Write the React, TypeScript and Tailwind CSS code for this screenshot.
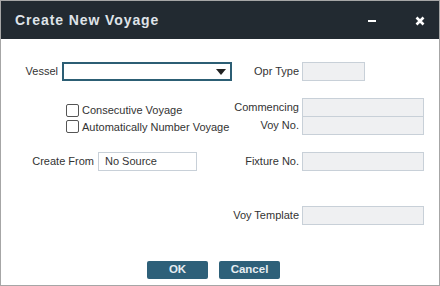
import React from "react";

const font = { fontFamily: '"Liberation Sans", Arial, sans-serif' };

const GrayInput = ({ className = "" }: { className?: string }) => (
    <div className={`h-[19px] bg-[#eff0f2] border border-[#c8d0d8] ${className}`}></div>
);

const Label = ({ children }: { children: React.ReactNode }) => (
    <span className="text-right pr-[3px] whitespace-nowrap">{children}</span>
);

const Check = ({ label }: { label: string }) => (
    <label className="flex items-center h-[18px] gap-[3px] whitespace-nowrap">
        <span className="block w-[13px] h-[13px] border border-[#555] rounded-[2px] bg-white"></span>
        <span>{label}</span>
    </label>
);

export default function App() {
    return (
        <div
            className="w-[440px] h-[286px] border border-[#a6a6a6] bg-white text-[11px] text-[#333] flex flex-col"
            style={font}
        >
            <div className="h-[38px] bg-[#222a31] flex items-center justify-between pl-[14px] pr-[14px] shrink-0">
                <span className="text-[14px] font-bold tracking-[0.9px] text-[#dfe3e8]">
                    Create New Voyage
                </span>
                <div className="flex items-center gap-[39px] pt-[1px]">
                    <span className="block w-[8px] h-[2px] bg-white"></span>
                    <svg width="10" height="10" viewBox="0 0 10 10">
                        <path d="M1.5 1.5 L8.5 8.5 M8.5 1.5 L1.5 8.5" stroke="white" strokeWidth="2.6" />
                    </svg>
                </div>
            </div>

            <div className="grid grid-cols-[231px_70px_122px] pt-[23px]">
                {/* row 1 */}
                <div className="flex items-center justify-end h-[19px]">
                    <span className="pr-[4px]">Vessel</span>
                    <div className="w-[170px] h-[19px] border-2 border-[#2c5e74] flex items-center justify-end pr-[4px]">
                        <svg width="10" height="6" viewBox="0 0 10 6">
                            <path d="M0 0 H10 L5 6 Z" fill="#222" />
                        </svg>
                    </div>
                </div>
                <div className="flex items-center justify-end h-[19px]">
                    <Label>Opr Type</Label>
                </div>
                <div className="flex items-center h-[19px]">
                    <GrayInput className="w-[63px]" />
                </div>

                {/* row 2 */}
                <div className="row-span-2 mt-[17px] h-[36px] pl-[65px] pt-[4px] flex flex-col">
                    <Check label="Consecutive Voyage" />
                    <Check label="Automatically Number Voyage" />
                </div>
                <div className="mt-[17px] h-[18px] flex items-center justify-end">
                    <Label>Commencing</Label>
                </div>
                <div className="mt-[17px] h-[18px]">
                    <GrayInput className="w-[122px]" />
                </div>
                <div className="h-[18px] flex items-center justify-end">
                    <Label>Voy No.</Label>
                </div>
                <div className="h-[18px]">
                    <GrayInput className="w-[122px]" />
                </div>

                {/* row 3 */}
                <div className="mt-[18px] h-[19px] flex items-center">
                    <span className="w-[97px] text-right pr-[4px]">Create From</span>
                    <div className="w-[99px] h-[19px] border border-[#c8d0d8] bg-white flex items-center pl-[6px]">
                        No Source
                    </div>
                </div>
                <div className="mt-[18px] h-[19px] flex items-center justify-end">
                    <Label>Fixture No.</Label>
                </div>
                <div className="mt-[18px] h-[19px]">
                    <GrayInput className="w-[122px]" />
                </div>

                {/* row 4 */}
                <div className="mt-[35px] h-[18px]"></div>
                <div className="mt-[35px] h-[18px] flex items-center justify-end">
                    <Label>Voy Template</Label>
                </div>
                <div className="mt-[35px] h-[18px]">
                    <GrayInput className="w-[122px]" />
                </div>
            </div>

            <div className="flex gap-[11px] mt-[37px] pl-[146px]">
                <button className="w-[61px] h-[18px] rounded-[2px] bg-[#2e6079] text-[#e6edf2] font-bold text-[11.5px] leading-none">
                    OK
                </button>
                <button className="w-[61px] h-[18px] rounded-[2px] bg-[#2e6079] text-[#e6edf2] font-bold text-[11.5px] leading-none">
                    Cancel
                </button>
            </div>
        </div>
    );
}
